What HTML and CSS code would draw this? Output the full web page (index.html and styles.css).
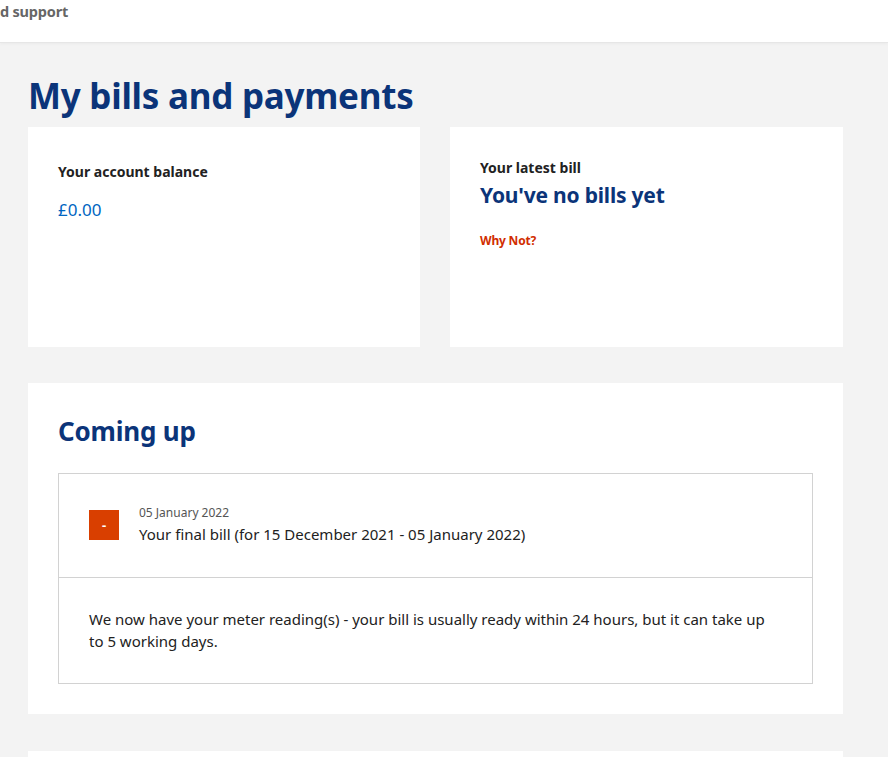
FILE: index.html
```html
<!DOCTYPE html>
<html lang="en">
<head>
<meta charset="utf-8">
<title>My bills and payments</title>
<link rel="stylesheet" href="styles.css">
</head>
<body>
<header class="topbar">
  <span class="nav-item">d support</span>
</header>
<main class="page">
  <h1 class="page-title">My bills and payments</h1>
  <div class="summary">
    <section class="card card-balance">
      <h2 class="label">Your account balance</h2>
      <p class="amount">£0.00</p>
    </section>
    <section class="card card-bill">
      <h2 class="label">Your latest bill</h2>
      <p class="bill-status">You've no bills yet</p>
      <a class="why-link" href="#">Why Not?</a>
    </section>
  </div>
  <section class="card card-upcoming">
    <h2 class="section-title">Coming up</h2>
    <div class="event-box">
      <div class="event-head">
        <span class="event-icon">-</span>
        <div class="event-text">
          <div class="event-date">05 January 2022</div>
          <div class="event-name">Your final bill (for 15 December 2021 - 05 January 2022)</div>
        </div>
      </div>
      <div class="event-body">
        <p>We now have your meter reading(s) - your bill is usually ready within 24 hours, but it can take up to 5 working days.</p>
      </div>
    </div>
  </section>
  <section class="card card-next"></section>
</main>
</body>
</html>
```

FILE: styles.css
```css
* { box-sizing: border-box; }
html, body { margin: 0; padding: 0; }
body {
  background: #f3f3f3;
  font-family: "Noto Sans", "Open Sans", sans-serif;
  color: #222;
  overflow: hidden;
  height: 757px;
}
.topbar {
  height: 43px;
  background: #fff;
  border-bottom: 1px solid #e6e6e6;
  box-shadow: 0 1px 3px rgba(0,0,0,0.04);
  padding: 0;
}
.nav-item {
  font-size: 14.5px;
  font-weight: 700;
  color: #666;
  letter-spacing: -0.2px;
}
.page {
  padding: 0 0 0 28px;
  width: 843px;
}
.page-title {
  margin: 31px 0 0 0;
  font-size: 35px;
  line-height: 44px;
  font-weight: 700;
  color: #0b3479;
  letter-spacing: -0.25px;
}
.summary {
  display: grid;
  grid-template-columns: 392px 1fr;
  gap: 30px;
  margin-top: 9px;
}
.card {
  background: #fff;
}
.card-balance, .card-bill {
  height: 220px;
  padding: 30px;
}
.label {
  margin: 0;
  font-size: 14px;
  line-height: 20px;
  font-weight: 700;
  color: #222;
}
.card-balance .label { margin-top: 5px; }
.card-bill .label { margin-top: 1px; }
.amount {
  margin: 17px 0 0 0;
  font-size: 17px;
  line-height: 22px;
  color: #0065c1;
}
.bill-status {
  margin: 2px 0 0 0;
  font-size: 21px;
  line-height: 30px;
  font-weight: 700;
  color: #0b3479;
  letter-spacing: -0.2px;
}
.why-link {
  display: inline-block;
  margin-top: 22px;
  font-size: 12px;
  font-weight: 700;
  color: #d12d00;
  text-decoration: none;
  letter-spacing: -0.2px;
}
.card-upcoming {
  margin-top: 36px;
  padding: 30px 30px 30px 30px;
}
.section-title {
  margin: 0;
  font-size: 26px;
  line-height: 36px;
  font-weight: 700;
  color: #0b3479;
  letter-spacing: -0.2px;
}
.event-box {
  margin-top: 24px;
  border: 1px solid #d2d2d2;
}
.event-head {
  display: flex;
  align-items: center;
  gap: 20px;
  padding: 31px 30px 32px 30px;
  border-bottom: 1px solid #d2d2d2;
}
.event-icon {
  width: 30px;
  height: 30px;
  flex: none;
  background: #d93f00;
  color: #fff;
  font-size: 13px;
  font-weight: 700;
  line-height: 30px;
  text-align: center;
}
.event-date {
  font-size: 12px;
  line-height: 16px;
  color: #555;
}
.event-name {
  margin-top: 2px;
  font-size: 15px;
  line-height: 22px;
  color: #222;
}
.event-body {
  padding: 30px 30px 31px 30px;
}
.event-body p {
  margin: 0;
  font-size: 15px;
  line-height: 22px;
  color: #222;
  max-width: 700px;
}
.card-next {
  margin-top: 37px;
  height: 40px;
}
```
